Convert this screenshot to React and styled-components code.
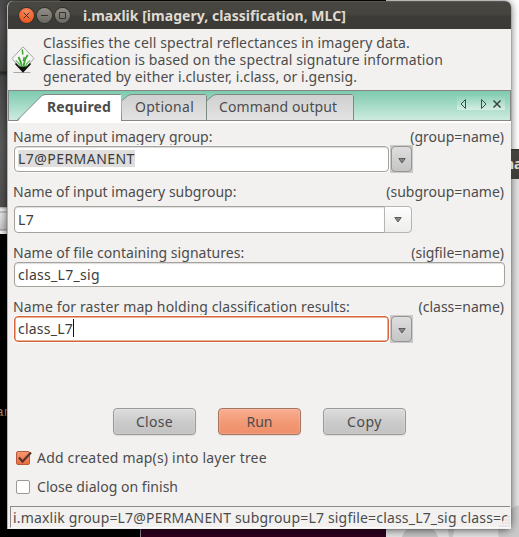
import React from "react";
import styled, { createGlobalStyle } from "styled-components";

const GlobalStyle = createGlobalStyle`
  * { box-sizing: border-box; }
  html, body { margin: 0; padding: 0; overflow: hidden; }
  body { font: 14px/19px "Noto Sans", "Open Sans", sans-serif; color: #4c4c4c; }
  button, input { font: inherit; color: inherit; margin: 0; }
`;

const Desktop = styled.div`
  position: relative;
  width: 519px;
  height: 537px;
  overflow: hidden;
  background: #000;
`;

/* Pieces of other windows that lie behind the dialog. */
const Backdrop = styled.div`
  position: absolute;
  left: ${(p) => p.$x}px;
  top: ${(p) => p.$y}px;
  width: ${(p) => p.$w}px;
  height: ${(p) => p.$h}px;
  overflow: hidden;
  background: ${(p) => p.$bg};
`;

const TerminalText = styled.span`
  display: block;
  margin-left: -4px;
  font: 13px/18px "Liberation Mono", monospace;
  color: #b08c62;
`;

const BackTitle = styled.span`
  display: block;
  margin-left: -6px;
  font-weight: bold;
  line-height: 29px;
  color: #dfdbd2;
`;

const Dialog = styled.main`
  position: absolute;
  left: 7px;
  top: 1px;
  width: 504px;
  height: 528px;
  display: flex;
  flex-direction: column;
  border-left: 1px solid #b5b4b2;
  border-radius: 6px 6px 0 0;
  overflow: hidden;
  background: #f2f1f0;
`;

const DialogShadow = styled.div`
  position: absolute;
  left: 7px;
  top: 1px;
  width: 504px;
  height: 528px;
  border-radius: 6px;
  box-shadow: 0 1px 8px rgba(0, 0, 0, 0.62), 0 0 1px #444;
`;

const TitleBar = styled.header`
  flex: 0 0 28px;
  display: flex;
  align-items: center;
  gap: 3px;
  margin-left: -1px;
  padding-left: 12px;
  border-top: 1px solid #5a5852;
  background: linear-gradient(#484742, #45443f 45%, #3c3b37 55%, #3c3b37);
`;

const WindowButton = styled.button`
  width: 15px;
  height: 15px;
  padding: 0;
  display: grid;
  place-items: center;
  border: 0;
  border-radius: 50%;
  background: ${(p) =>
    p.$close
      ? "radial-gradient(circle at 50% 25%, #f98b63, #f0662f 55%, #df4f16)"
      : "linear-gradient(#918f87, #696761)"};
  box-shadow: 0 0 0 1px #34332f;
`;

const Title = styled.h1`
  margin: 0 0 0 10px;
  font-size: 14px;
  line-height: 19px;
  font-weight: bold;
  letter-spacing: 0.03px;
  color: #dfdbd2;
  white-space: nowrap;
`;

const Intro = styled.section`
  flex: 0 0 61px;
  display: flex;
  padding: 5px 0 0 3px;
`;

const LogoBox = styled.div`
  width: 24px;
  margin: 12px 8px 0 0;
`;

const Line = styled.p`
  margin: 0;
  line-height: 17px;
  letter-spacing: ${(p) => p.$track}px;
  white-space: nowrap;
`;

const TabStrip = styled.nav`
  flex: 0 0 31px;
  display: flex;
  align-items: flex-end;
  padding-left: 7px;
  border: 1px solid #868686;
  background: linear-gradient(#7ecaaf, #cdebdf);
`;

const TabEdge = styled.button`
  width: ${(p) => p.$w}px;
  height: ${(p) => (p.$active ? 27 : 26)}px;
  margin-bottom: ${(p) => (p.$active ? -1 : 0)}px;
  padding: 1px 1px 0 ${(p) => (p.$active ? 2 : 0)}px;
  display: flex;
  border: 0;
  background: #7c8a84;
  clip-path: ${(p) =>
    p.$active
      ? "polygon(0 100%, 4px 23px, 25px 2px, 28px 0, 104px 0, 105px 1px, 106px 100%)"
      : "polygon(0 100%, 0 6px, 6px 1px, 9px 0, calc(100% - 2px) 0, 100% 2px, 100% 100%)"};
`;

const TabFace = styled.span`
  flex: 1;
  height: 100%;
  padding-left: ${(p) => p.$pad}px;
  text-align: left;
  line-height: 23px;
  font-weight: ${(p) => (p.$active ? "bold" : "normal")};
  letter-spacing: ${(p) => p.$track}px;
  white-space: nowrap;
  background: ${(p) => (p.$active ? "#fff" : "linear-gradient(#cfcfcf, #e3e3e3)")};
  clip-path: ${(p) =>
    p.$active
      ? "polygon(0 100%, 3px 22px, 24px 1px, 27px 0, 100% 0, 100% 100%)"
      : "polygon(0 100%, 0 6px, 6px 1px, 9px 0, 100% 0, 100% 100%)"};
`;

const TabTools = styled.div`
  align-self: flex-start;
  width: 48px;
  height: 14px;
  margin: 5px 5px 0 auto;
  background: linear-gradient(#90d2ba, #d5eee5);
`;

const Page = styled.section`
  flex: 1 1 0;
  min-height: 0;
  display: flex;
  flex-direction: column;
  padding: 4px 5px 0 5px;
  border-top: 2px solid #fff;
`;

const Field = styled.div`
  flex: 0 0 ${(p) => p.$h}px;
`;

const Caption = styled.div`
  display: flex;
  justify-content: space-between;
  padding-right: 2px;
  white-space: nowrap;
`;

const Label = styled.label`
  letter-spacing: ${(p) => p.$track || 0}px;
`;

const Controls = styled.div`
  display: flex;
  margin-top: ${(p) => p.$top || 0}px;
  padding-left: 1px;
`;

const Entry = styled.div`
  width: ${(p) => p.$w}px;
  height: ${(p) => p.$h}px;
  display: flex;
  align-items: center;
  padding: 0 0 ${(p) => (p.$h === 26 ? 2 : 0)}px 3px;
  border: 1px solid ${(p) => (p.$focus ? "#d4633a" : "#a5a29e")};
  border-radius: ${(p) => (p.$combo ? "4px 0 0 4px" : "4px")};
  background: #fff;
  box-shadow: ${(p) =>
    p.$focus ? "0 0 0 1px #fff, inset 0 0 0 0.5px #d4633a" : p.$halo ? "0 0 0 1px #fafafa, inset 0 1px 1px #ddd" : "inset 0 1px 1px #ddd"};
  color: #3c3c3c;
  letter-spacing: ${(p) => p.$track}px;
`;

const Selected = styled.span`
  height: 17px;
  line-height: 17px;
  background: #dfdedc;
`;

const Caret = styled.span`
  width: 1px;
  height: 18px;
  background: #111;
`;

const PickerFrame = styled.div`
  width: 23px;
  height: 28px;
  margin: -1px 0 -1px 1px;
  padding: 1px;
  background: #cbcac9;
`;

const PickerButton = styled.button`
  width: ${(p) => (p.$combo ? 28 : 21)}px;
  height: ${(p) => (p.$combo ? 27 : 26)}px;
  margin-left: ${(p) => (p.$combo ? -1 : 0)}px;
  padding: ${(p) => (p.$combo ? "1px 0 0" : "3px 0 0")};
  display: grid;
  place-items: center;
  border: 1px solid ${(p) => (p.$combo ? "#b7b5b2" : "#969696")};
  border-radius: ${(p) => (p.$combo ? "0 4px 4px 0" : "4px")};
  background: ${(p) => (p.$combo ? "linear-gradient(#fdfdfd, #ededec)" : "linear-gradient(#dedede, #c5c5c5)")};
`;

const Actions = styled.div`
  display: flex;
  gap: 22px;
  margin: 0 0 13px 100px;
`;

const ActionButton = styled.button`
  width: 83px;
  height: 27px;
  padding: 0 0 1px;
  border: 1px solid ${(p) => (p.$primary ? "#a57462" : "#9a9a9a")};
  border-radius: 4px;
  background: ${(p) =>
    p.$primary
      ? "linear-gradient(#f9ae90, #f39a77 50%, #ee8e68)"
      : "linear-gradient(#dddddd, #cbcbcb 50%, #c3c3c3)"};
  box-shadow: inset 0 0 2px rgba(255, 255, 255, 0.5), 0 1px 1px #dedddc;
  letter-spacing: ${(p) => p.$track}px;
`;

const Option = styled.label`
  display: flex;
  align-items: center;
  flex: 0 0 19px;
  margin-bottom: 10px;
  padding-left: 3px;
  letter-spacing: ${(p) => p.$track}px;

  &:last-child { margin-bottom: 0; }
`;

const Box = styled.span`
  width: 14px;
  height: 14px;
  margin-right: 7px;
  border: 1px solid ${(p) => (p.$on ? "#b75a39" : "#9d9a96")};
  border-radius: 2px;
  background: ${(p) => (p.$on ? "linear-gradient(#f79670, #e96e40)" : "#fff")};

  svg { display: block; margin: -1px 0 0 -1px; overflow: visible; }
`;

const StatusBar = styled.footer`
  position: relative;
  flex: 0 0 22px;
  margin: 0 1px 1px 2px;
  padding: 0 0 0 2px;
  border-top: 1px solid #8c8b8a;
  border-left: 1px solid #8c8b8a;
  border-bottom: 1px solid #fbfbfb;
  line-height: 21px;
  letter-spacing: 0.18px;
  white-space: nowrap;
  overflow: hidden;
`;

const StatusText = styled.div`
  width: 495px;
  overflow: hidden;
`;

const Grip = styled.svg`
  position: absolute;
  right: 0;
  bottom: 0;
`;

const Arrow = () => (
  <svg width="8" height="6" viewBox="0 0 8 6">
    <path d="M.8.5h6.4L4 5z" fill="#888" stroke="#5c5c5c" strokeWidth="1" />
  </svg>
);

const Glyph = ({ d }) => (
  <svg width="9" height="9" viewBox="0 0 9 9">
    <path d={d} fill="none" stroke="#3b2f2a" strokeWidth="1" />
  </svg>
);

const Logo = () => (
  <svg width="24" height="29" viewBox="0 0 24 29">
    <path d="M2.500 26.500h17" stroke="#a6a6a6" strokeWidth="1.200" />
    <path d="M12 .8 23 12.500 12 25 1 12.500z" fill="#f5f5f4" stroke="#a4a4a4" />
    <path d="M4.500 17.500 12 25.500l7.500-8" fill="none" stroke="#111" strokeWidth="1.800" />
    <path d="m7.500 20.500 2.500-.5 2 .8 2-.8 2.500.5L12 25.500z" fill="#0d150d" />
    <g fill="none" stroke="#35a52c">
      <path d="M11 21C10.500 17 9 14 7.500 11" strokeWidth="1.800" />
      <path d="M12.800 21c0-4.500 1.200-8.500 4-12" strokeWidth="1.800" />
      <path d="M9.500 20.500C8.500 18 7 16 4.800 14.500M14.500 20.500c.7-2.500 2-4.500 4.500-6" strokeWidth="1.100" stroke="#62b959" />
      <path d="m11.300 3.500.5 5M13.300 11l-1 4" strokeWidth="1.500" />
    </g>
  </svg>
);

const Picker = () => (
  <PickerFrame>
    <PickerButton><Arrow /></PickerButton>
  </PickerFrame>
);

const Tab = ({ active, width, pad, track, children }) => (
  <TabEdge $active={active} $w={width}>
    <TabFace $active={active} $pad={pad} $track={track}>{children}</TabFace>
  </TabEdge>
);

export default function App() {
  return (
    <Desktop>
      <GlobalStyle />
      <Backdrop $x={0} $y={0} $w={60} $h={207} $bg="linear-gradient(#4a4a4a, #555 10%, #464646 34%, #292929 35%, #494949 37%, #5c5c5c 70%, #505050)" />
      <Backdrop $x={0} $y={207} $w={60} $h={27} $bg="linear-gradient(#a5a5a5, #efefef 2px, #efefef 4px, #999 5px, #e9e9e9 6px, #c9c9c9 22px, #888 23px, #f0f0f0 24px)" />
      <Backdrop $x={0} $y={404} $w={14} $h={20} $bg="#000"><TerminalText>an</TerminalText></Backdrop>
      <Backdrop $x={140} $y={520} $w={247} $h={17} $bg="linear-gradient(90deg, #888 1px, #2c001e 1px)" />
      <Backdrop $x={386} $y={0} $w={133} $h={150} $bg="#fff" />
      <Backdrop $x={386} $y={178} $w={133} $h={359} $bg="#e4e3e3">
        <svg width="133" height="359">
          <circle cx="34" cy="365" r="19" fill="#c4c4c4" />
          <path d="M61 345h8l-2 14h-4z" fill="#c9c9c9" />
          <circle cx="138" cy="353" r="26" fill="#cbcaca" />
        </svg>
      </Backdrop>
      <DialogShadow />
      <Backdrop $x={511} $y={149} $w={8} $h={30} $bg="linear-gradient(#2c2b28, #45443f 2px, #3c3b37)"><BackTitle>na</BackTitle></Backdrop>

      <Dialog>
        <TitleBar>
          <WindowButton $close aria-label="Close window"><Glyph d="M1.700 1.700l5.600 5.600M7.300 1.700 1.700 7.300" /></WindowButton>
          <WindowButton aria-label="Minimize"><Glyph d="M1 4.500h7" /></WindowButton>
          <WindowButton aria-label="Maximize"><Glyph d="M1.500 1.500h6v6h-6z" /></WindowButton>
          <Title>i.maxlik [imagery, classification, MLC]</Title>
        </TitleBar>

        <Intro>
          <LogoBox><Logo /></LogoBox>
          <div>
            <Line $track={0.12}>Classifies the cell spectral reflectances in imagery data.</Line>
            <Line $track={0.115}>Classification is based on the spectral signature information</Line>
            <Line $track={0.085}>generated by either i.cluster, i.class, or i.gensig.</Line>
          </div>
        </Intro>

        <TabStrip>
          <Tab active width={106} pad={29} track={0.14}>Required</Tab>
          <Tab width={85} pad={13} track={0.28}>Optional</Tab>
          <Tab width={147} pad={12} track={0.1}>Command output</Tab>
          <TabTools>
            <svg width="48" height="14" viewBox="0 0 48 14">
              <path d="M8.500 2.500v9L4 7zM24.500 2.500v9L29 7z" fill="none" stroke="#3d5048" />
              <path d="m36.500 3.500 7 7M43.500 3.500l-7 7" stroke="#3d4541" strokeWidth="1.500" />
            </svg>
          </TabTools>
        </TabStrip>

        <Page>
          <Field $h={55}>
            <Caption><Label>Name of input imagery group:</Label><span>(group=name)</span></Caption>
            <Controls>
              <Entry $w={375} $h={26} $halo $track={0.45}><Selected>L7@PERMANENT</Selected></Entry>
              <Picker />
            </Controls>
          </Field>
          <Field $h={61}>
            <Caption><Label>Name of input imagery subgroup:</Label><span>(subgroup=name)</span></Caption>
            <Controls $top={5}>
              <Entry $w={371} $h={27} $combo $track={0.3}>L7</Entry>
              <PickerButton $combo><Arrow /></PickerButton>
            </Controls>
          </Field>
          <Field $h={54}>
            <Caption><Label $track={0.03}>Name of file containing signatures:</Label><span>(sigfile=name)</span></Caption>
            <Controls><Entry $w={491} $h={25} $track={0.3}>class_L7_sig</Entry></Controls>
          </Field>
          <Field $h={111}>
            <Caption><Label $track={0.12}>Name for raster map holding classification results:</Label><span>(class=name)</span></Caption>
            <Controls>
              <Entry $w={375} $h={26} $focus $track={0.22}>class_L7<Caret /></Entry>
              <Picker />
            </Controls>
          </Field>

          <Actions>
            <ActionButton $track={0.3}>Close</ActionButton>
            <ActionButton $primary $track={0}>Run</ActionButton>
            <ActionButton $track={0.5}>Copy</ActionButton>
          </Actions>
          <Option $track={0.2}>
            <Box $on>
              <svg width="16" height="14" viewBox="0 0 16 14">
                <path d="M3 6.500 6.500 10.500 15 1.500" fill="none" stroke="#5a342a" strokeWidth="2.200" />
              </svg>
            </Box>
            Add created map(s) into layer tree
          </Option>
          <Option $track={0.03}><Box />Close dialog on finish</Option>
        </Page>

        <StatusBar>
          <StatusText>i.maxlik group=L7@PERMANENT subgroup=L7 sigfile=class_L7_sig class=c</StatusText>
          <Grip width="14" height="13" viewBox="0 0 14 13">
            <path d="M14 0v13H1z" fill="#f2f1f0" />
            <path d="M12 3h2M9 6h5M6 9h8M3 12h11" stroke="#cbc9c7" strokeDasharray="1.500 1.500" />
          </Grip>
        </StatusBar>
      </Dialog>
    </Desktop>
  );
}
